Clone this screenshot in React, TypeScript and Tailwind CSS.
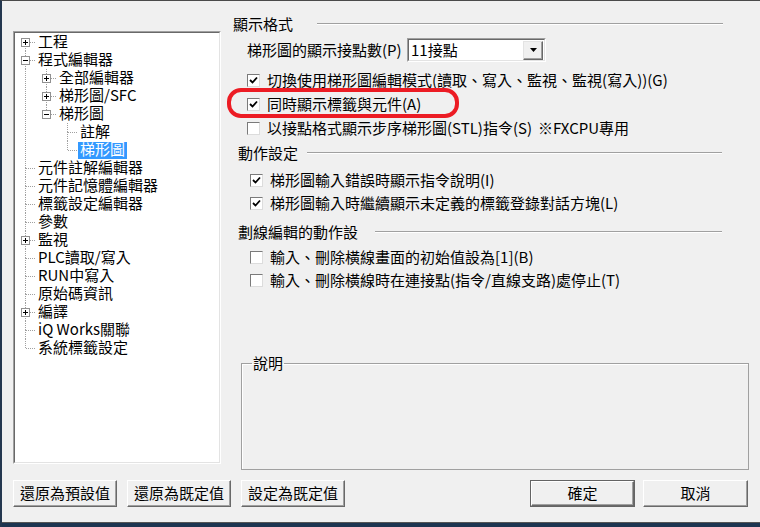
import React from "react";

type TreeNode = { label: string; level: number; toggle?: "+" | "-"; selected?: boolean };

const nodes: TreeNode[] = [
  { label: "工程", level: 0, toggle: "+" },
  { label: "程式編輯器", level: 0, toggle: "-" },
  { label: "全部編輯器", level: 1, toggle: "+" },
  { label: "梯形圖/SFC", level: 1, toggle: "+" },
  { label: "梯形圖", level: 1, toggle: "-" },
  { label: "註解", level: 2 },
  { label: "梯形圖", level: 2, selected: true },
  { label: "元件註解編輯器", level: 0 },
  { label: "元件記憶體編輯器", level: 0 },
  { label: "標籤設定編輯器", level: 0 },
  { label: "參數", level: 0 },
  { label: "監視", level: 0, toggle: "+" },
  { label: "PLC讀取/寫入", level: 0 },
  { label: "RUN中寫入", level: 0 },
  { label: "原始碼資訊", level: 0 },
  { label: "編譯", level: 0, toggle: "+" },
  { label: "iQ Works關聯", level: 0 },
  { label: "系統標籤設定", level: 0 },
];

// is there a later node on level k before the branch closes
const more = (i: number, k: number) => {
  for (let j = i + 1; j < nodes.length; j++) {
    if (nodes[j].level < k) return false;
    if (nodes[j].level === k) return true;
  }
  return false;
};

const TreeCell = ({ i, k }: { i: number; k: number }) => {
  const n = nodes[i];
  const dot = { stroke: "#a0a0a0", strokeDasharray: "1 1", shapeRendering: "crispEdges" as const };
  if (k < n.level) {
    return (
      <svg width="21" height="18" className="shrink-0">
        {more(i, k) && <line x1="10.5" y1="0" x2="10.5" y2="18" {...dot} />}
      </svg>
    );
  }
  const top = !(i === 0 && n.level === 0);
  return (
    <svg width="21" height="18" className="shrink-0">
      {top && <line x1="10.5" y1="0" x2="10.5" y2="9" {...dot} />}
      {more(i, k) && <line x1="10.5" y1="9" x2="10.5" y2="18" {...dot} />}
      <line x1="11" y1="9.5" x2="21" y2="9.5" {...dot} />
      {n.toggle && (
        <g shapeRendering="crispEdges">
          <rect x="6.5" y="5.5" width="8" height="8" fill="#fff" stroke="#919191" />
          <line x1="8" y1="9.5" x2="13" y2="9.5" stroke="#000" />
          {n.toggle === "+" && <line x1="10.5" y1="7" x2="10.5" y2="12" stroke="#000" />}
        </g>
      )}
    </svg>
  );
};

const Tree = () => (
  <div className="ml-[11px] mt-[30px] h-[433px] w-[208px] border border-t-[#a0a0a0] border-l-[#a0a0a0] border-r-white border-b-white">
    <div className="h-full w-full border border-t-[#696969] border-l-[#696969] border-r-[#e3e3e3] border-b-[#e3e3e3] bg-white">
      {nodes.map((n, i) => (
        <div key={i} className="flex h-[18px] items-center">
          {Array.from({ length: n.level + 1 }, (_, k) => (
            <TreeCell key={k} i={i} k={k} />
          ))}
          <span
            className={
              "h-[17px] px-[2px] text-[15px] leading-[14px] whitespace-nowrap " +
              (n.selected ? "bg-[#3399ff] text-white" : "text-black")
            }
          >
            {n.label}
          </span>
        </div>
      ))}
    </div>
  </div>
);

const Check = ({ checked }: { checked?: boolean }) => (
  <div className="h-[13px] w-[13px] shrink-0 border border-t-[#7a7a7a] border-l-[#7a7a7a] border-r-[#dcdcdc] border-b-[#dcdcdc] bg-white">
    {checked && (
      <svg width="11" height="11" viewBox="0 0 11 11">
        <polyline points="2,5 4.5,7.5 9,2.5" fill="none" stroke="#000" strokeWidth="1.8" />
      </svg>
    )}
  </div>
);

const CheckRow = ({ checked, label, className }: { checked?: boolean; label: React.ReactNode; className: string }) => (
  <div className={"flex h-[18px] items-center " + className}>
    <Check checked={checked} />
    <span className="ml-[7px] whitespace-nowrap text-[15px] leading-[18px]">{label}</span>
  </div>
);

const GroupHeader = ({ title, textW, lineW, ml, className }: { title: string; textW: string; lineW: string; ml: string; className: string }) => (
  <div className={"flex h-[18px] items-center " + ml + " " + className}>
    <span className={"whitespace-nowrap text-[15px] leading-[18px] " + textW}>{title}</span>
    <div className={"h-0 border-t border-b border-t-[#a0a0a0] border-b-white " + lineW} />
  </div>
);

const Button = ({ children, w, isDefault }: { children: string; w: string; isDefault?: boolean }) => {
  const face = (
    <div className="flex h-full w-full items-center justify-center border border-t-white border-l-white border-r-[#696969] border-b-[#696969] bg-[#f0f0f0] text-[15px] shadow-[inset_-1px_-1px_0_#a0a0a0]">
      {children}
    </div>
  );
  return isDefault ? (
    <div className={"h-[27px] border border-[#646464] " + w}>{face}</div>
  ) : (
    <div className={"h-[27px] " + w}>{face}</div>
  );
};

export default function App() {
  return (
    <div className="flex h-[527px] w-[760px] flex-col overflow-hidden border-t border-l-2 border-t-[#4a4a4a] border-l-[#24374f] bg-[#f0f0f0] font-['Noto_Sans_CJK_TC','Noto_Sans',sans-serif] text-black">
      <div className="flex h-[470px]">
        <Tree />
        <div className="relative flex flex-1 flex-col pt-[14px]">
          <GroupHeader title="顯示格式" ml="ml-[12px]" textW="w-[84px]" lineW="w-[406px]" className="" />

          <div className="mt-[5px] flex h-[24px] items-center">
            <span className="ml-[26px] w-[160px] whitespace-nowrap text-[15px]">梯形圖的顯示接點數(P)</span>
            <div className="h-[24px] w-[139px] border border-t-[#a0a0a0] border-l-[#a0a0a0] border-r-white border-b-white">
              <div className="flex h-full w-full items-center border border-t-[#696969] border-l-[#696969] border-r-[#e3e3e3] border-b-[#e3e3e3] bg-white pr-px">
                <span className="ml-[2px] flex-1 text-[15px] leading-[18px]">11接點</span>
                <div className="flex h-[19px] w-[20px] items-center justify-center border border-t-[#e3e3e3] border-l-[#e3e3e3] border-r-[#696969] border-b-[#696969] bg-[#f0f0f0] shadow-[inset_-1px_-1px_0_#a0a0a0]">
                  <svg width="7" height="4" viewBox="0 0 7 4">
                    <polygon points="0,0 7,0 3.5,4" fill="#000" />
                  </svg>
                </div>
              </div>
            </div>
          </div>

          <div className="mt-[9px] flex flex-col gap-[6px]">
            <CheckRow className="ml-[26px]" checked label="切換使用梯形圖編輯模式(讀取、寫入、監視、監視(寫入))(G)" />
            <CheckRow className="ml-[26px]" checked label="同時顯示標籤與元件(A)" />
            <CheckRow
              className="ml-[26px]"
              label={
                <>
                  以接點格式顯示步序梯形圖(STL)指令(S)<span className="ml-[6px]">※FXCPU專用</span>
                </>
              }
            />
          </div>

          <GroupHeader title="動作設定" ml="ml-[17px]" textW="w-[69px]" lineW="w-[415px]" className="mt-[7px]" />
          <div className="mt-[9px] flex flex-col gap-[5px]">
            <CheckRow className="ml-[29px]" checked label="梯形圖輸入錯誤時顯示指令說明(I)" />
            <CheckRow className="ml-[29px]" checked label="梯形圖輸入時繼續顯示未定義的標籤登錄對話方塊(L)" />
          </div>

          <GroupHeader title="劃線編輯的動作設" ml="ml-[17px]" textW="w-[137px]" lineW="w-[347px]" className="mt-[11px]" />
          <div className="mt-[7px] flex flex-col gap-[5px]">
            <CheckRow className="ml-[29px]" label="輸入、刪除橫線畫面的初始值設為[1](B)" />
            <CheckRow className="ml-[29px]" label="輸入、刪除橫線時在連接點(指令/直線支路)處停止(T)" />
          </div>

          <fieldset className="ml-[20px] mt-[65px] h-[116px] w-[508px] border border-[#a0a0a0] px-[10px] shadow-[inset_1px_1px_0_#fff]">
            <legend className="px-px text-[15px] leading-[18px]">說明</legend>
          </fieldset>

          <div className="pointer-events-none absolute left-[6px] top-[87px] h-[30px] w-[232px] rounded-[14px] border-4 border-[#ec1c24]" />
        </div>
      </div>

      <div className="mt-[9px] flex">
        <div className="ml-[11px] flex gap-[10px]">
          <Button w="w-[104px]">還原為預設值</Button>
          <Button w="w-[104px]">還原為既定值</Button>
          <Button w="w-[104px]">設定為既定值</Button>
        </div>
        <div className="ml-auto mr-[12px] flex gap-[8px]">
          <Button w="w-[105px]" isDefault>確定</Button>
          <Button w="w-[105px]">取消</Button>
        </div>
      </div>

      <div className="flex-1" />
      <div className="h-[5px] border-t border-t-[#555] bg-[#1d3450]" />
    </div>
  );
}
